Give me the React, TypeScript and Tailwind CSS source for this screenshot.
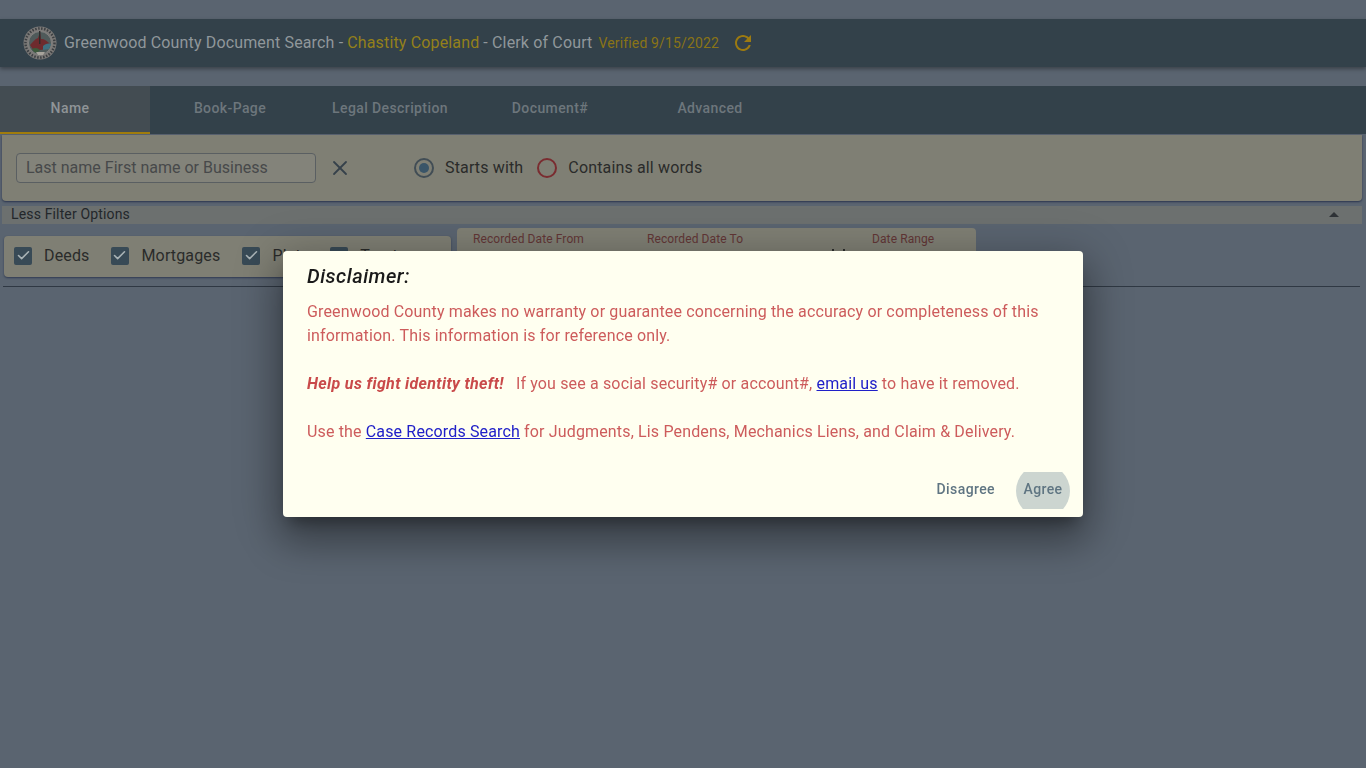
import { Check, X } from 'lucide-react'

const font = { fontFamily: 'Roboto, sans-serif' }

function Seal() {
  return (
    <svg width="34" height="34" viewBox="0 0 34 34" className="shrink-0">
      <circle cx="17" cy="17" r="16.5" fill="#7c7a78" />
      <circle cx="17" cy="17" r="14.5" fill="none" stroke="#3c3f42" strokeWidth="2.5" strokeDasharray="1.5 1.5" />
      <circle cx="17" cy="17" r="11.5" fill="#4f5a5a" stroke="#8a8886" strokeWidth="0.8" />
      <path d="M7 19c3-3 5-6 8-7l2-6 1 7c4 0 6 2 9 5l-4 5-12 2z" fill="#6e2a2d" />
      <path d="M20 20c2-2 5-3 8-2l-2 5-6 1z" fill="#3f6f80" />
      <path d="M9 23c3-2 6-1 8 1l-3 3-3-1z" fill="#3d5a3c" />
      <path d="M16 5h1.4v13H16z" fill="#2c2c2c" />
      <path d="M13 26h9l-2 3h-5z" fill="#a8a49c" />
    </svg>
  )
}

function Tab({ label, active }: { label: string; active?: boolean }) {
  if (active) {
    return (
      <div className="flex h-[48px] w-[150px] items-center justify-center border-b-2 border-[#a07c0c] bg-[#434c52] pb-[2px] pr-[10px] text-sm font-medium tracking-[0.4px] text-[#8f9497]">
        {label}
      </div>
    )
  }
  return (
    <div className="flex h-[48px] w-[160px] items-center justify-center pb-[4px] text-sm font-medium tracking-[0.4px] text-[#6d767c]">
      {label}
    </div>
  )
}

function Box({ label, gap }: { label: string; gap: string }) {
  return (
    <div className={`flex items-center ${gap}`}>
      <span className="flex h-[18px] w-[18px] items-center justify-center rounded-[2px] bg-[#384a56]">
        <Check size={15} strokeWidth={2.5} className="text-[#a9b3b6]" />
      </span>
      <span className="text-base tracking-[0.15px] text-[#2a2b2a]">{label}</span>
    </div>
  )
}

export default function App() {
  return (
    <div className="relative h-[768px] w-[1366px] overflow-hidden bg-[#5a6470] tracking-[0.15px]" style={font}>
      <div className="pt-[19px]">
        <header className="flex h-[48px] items-center bg-[#33414a] pl-[23px] shadow-[0_2px_4px_rgba(0,0,0,0.35)]">
          <Seal />
          <span className="ml-[7px] text-base text-[#90979b]">Greenwood County Document Search - </span>
          <span className="ml-1 text-base text-[#94801a]">Chastity Copeland</span>
          <span className="ml-1 text-base text-[#90979b]">- Clerk of Court</span>
          <span className="ml-[6px] text-sm text-[#8a7416]">Verified 9/15/2022</span>
          <svg width="24" height="24" viewBox="0 0 24 24" className="ml-[12px] fill-[#9c7a10]">
            <path d="M17.65 6.35C16.2 4.9 14.21 4 12 4c-4.42 0-7.99 3.58-7.99 8s3.57 8 7.99 8c3.73 0 6.84-2.55 7.73-6h-2.08c-.82 2.33-3.04 4-5.65 4-3.31 0-6-2.69-6-6s2.69-6 6-6c1.66 0 3.14.69 4.22 1.78L13 11h7V4l-2.35 2.35z" />
          </svg>
        </header>

        <nav className="mt-[19px] flex h-[48px] bg-[#33414a]">
          <Tab label="Name" active />
          <Tab label="Book-Page" />
          <Tab label="Legal Description" />
          <Tab label="Document#" />
          <Tab label="Advanced" />
        </nav>

        <section className="ml-[2px] mr-[4px] mt-[1px] flex h-[66px] items-center rounded-b-[4px] bg-[#7f7f74] pl-[14px] shadow-[0_1px_2px_rgba(30,40,70,0.8)]">
          <div className="flex h-[30px] w-[300px] items-center rounded-[4px] border border-[#5a5f62] bg-[#83837a] pl-[9px] text-base tracking-normal text-[#47494a]">
            Last name First name or Business
          </div>
          <X size={24} strokeWidth={1.8} className="ml-[12px] text-[#35414a]" />
          <div className="ml-[62px] flex items-center">
            <span className="flex h-5 w-5 items-center justify-center rounded-full border-2 border-[#414d55]">
              <span className="h-[10px] w-[10px] rounded-full bg-[#3a5568]" />
            </span>
            <span className="ml-[11px] text-base text-[#2a2b2a]">Starts with</span>
            <span className="ml-[14px] h-5 w-5 rounded-full border-2 border-[#7a2c30]" />
            <span className="ml-[11px] text-base text-[#2a2b2a]">Contains all words</span>
          </div>
        </section>

        <div className="ml-[2px] mr-[4px] mt-[5px] flex h-[18px] items-center justify-between bg-[#6c706f] pb-[2px] pl-[9px] pr-[23px] text-sm text-[#23272b]">
          <span>Less Filter Options</span>
          <span className="h-0 w-0 border-x-[5px] border-b-[5px] border-x-transparent border-b-[#2e3236]" />
        </div>

        <div className="mt-[4px] flex items-start pl-[4px]">
          <div className="mt-[8px] flex h-[41px] w-[447px] items-center gap-[21px] overflow-hidden rounded-[4px] bg-[#7f7f74] pb-[2px] pl-[10px] shadow-[0_1px_2px_rgba(30,40,70,0.7)]">
            <Box label="Deeds" gap="gap-[12px]" />
            <Box label="Mortgages" gap="gap-[13px] mr-[1px]" />
            <Box label="Plats" gap="gap-[12px]" />
            <Box label="Trustee" gap="gap-[12px]" />
          </div>
          <div className="relative ml-[6px] h-[50px] w-[519px] rounded-t-[4px] bg-[#7f7f74] pl-[16px] pt-[3px] text-xs tracking-[0.1px] text-[#623636]">
            <div className="flex">
              <span className="w-[174px]">Recorded Date From</span>
              <span className="w-[225px]">Recorded Date To</span>
              <span>Date Range</span>
            </div>
            <span className="absolute left-[375px] top-[21px] h-[3px] w-[2px] bg-[#2c2e2c]" />
            <span className="absolute left-[386px] top-[21px] h-[3px] w-[2px] bg-[#2c2e2c]" />
          </div>
        </div>

        <div className="ml-[3px] mr-[6px] mt-[8px] border-t border-[#2f3843]" />
      </div>

      <div className="fixed inset-0 flex items-start justify-center pt-[251px]">
        <div className="flex h-[266px] w-[800px] flex-col rounded-[4px] bg-[#fffff0] shadow-[0_11px_15px_-7px_rgba(0,0,0,0.35),0_24px_38px_3px_rgba(0,0,0,0.25),0_9px_46px_8px_rgba(0,0,0,0.2)]">
          <h2 className="pl-[24px] pt-[9px] text-[20px] leading-[32px] font-medium tracking-[0.5px] text-[#1a1a1a] italic">
            Disclaimer:
          </h2>
          <div className="px-[24px] pt-[8px] text-base leading-[24px] text-[#cd5c5c]">
            <p>
              Greenwood County makes no warranty or guarantee concerning the accuracy or completeness of this
              information. This information is for reference only.
            </p>
            <p className="mt-[24px]">
              <b className="font-bold tracking-[0.35px] text-[#c94a4a] italic">Help us fight identity theft!</b>
              <span className="ml-[12px]">If you see a social security# or account#, </span>
              <a className="text-[#2020c8] underline">email us</a> to have it removed.
            </p>
            <p className="mt-[24px]">
              Use the <a className="text-[#2020c8] underline">Case Records Search</a> for Judgments, Lis Pendens,
              Mechanics Liens, and Claim &amp; Delivery.
            </p>
          </div>
          <div className="mt-[28px] flex items-center justify-end pr-[13px] text-sm font-medium tracking-[0.4px] text-[#5f7582]">
            <button className="mr-[21px] h-[37px] pb-[4px]">Disagree</button>
            <button className="relative h-[37px] w-[54px] overflow-hidden pb-[4px]">
              <span className="absolute left-0 top-[-8.5px] h-[54px] w-[54px] rounded-full bg-[#ccd5d0]" />
              <span className="relative">Agree</span>
            </button>
          </div>
        </div>
      </div>
    </div>
  )
}
